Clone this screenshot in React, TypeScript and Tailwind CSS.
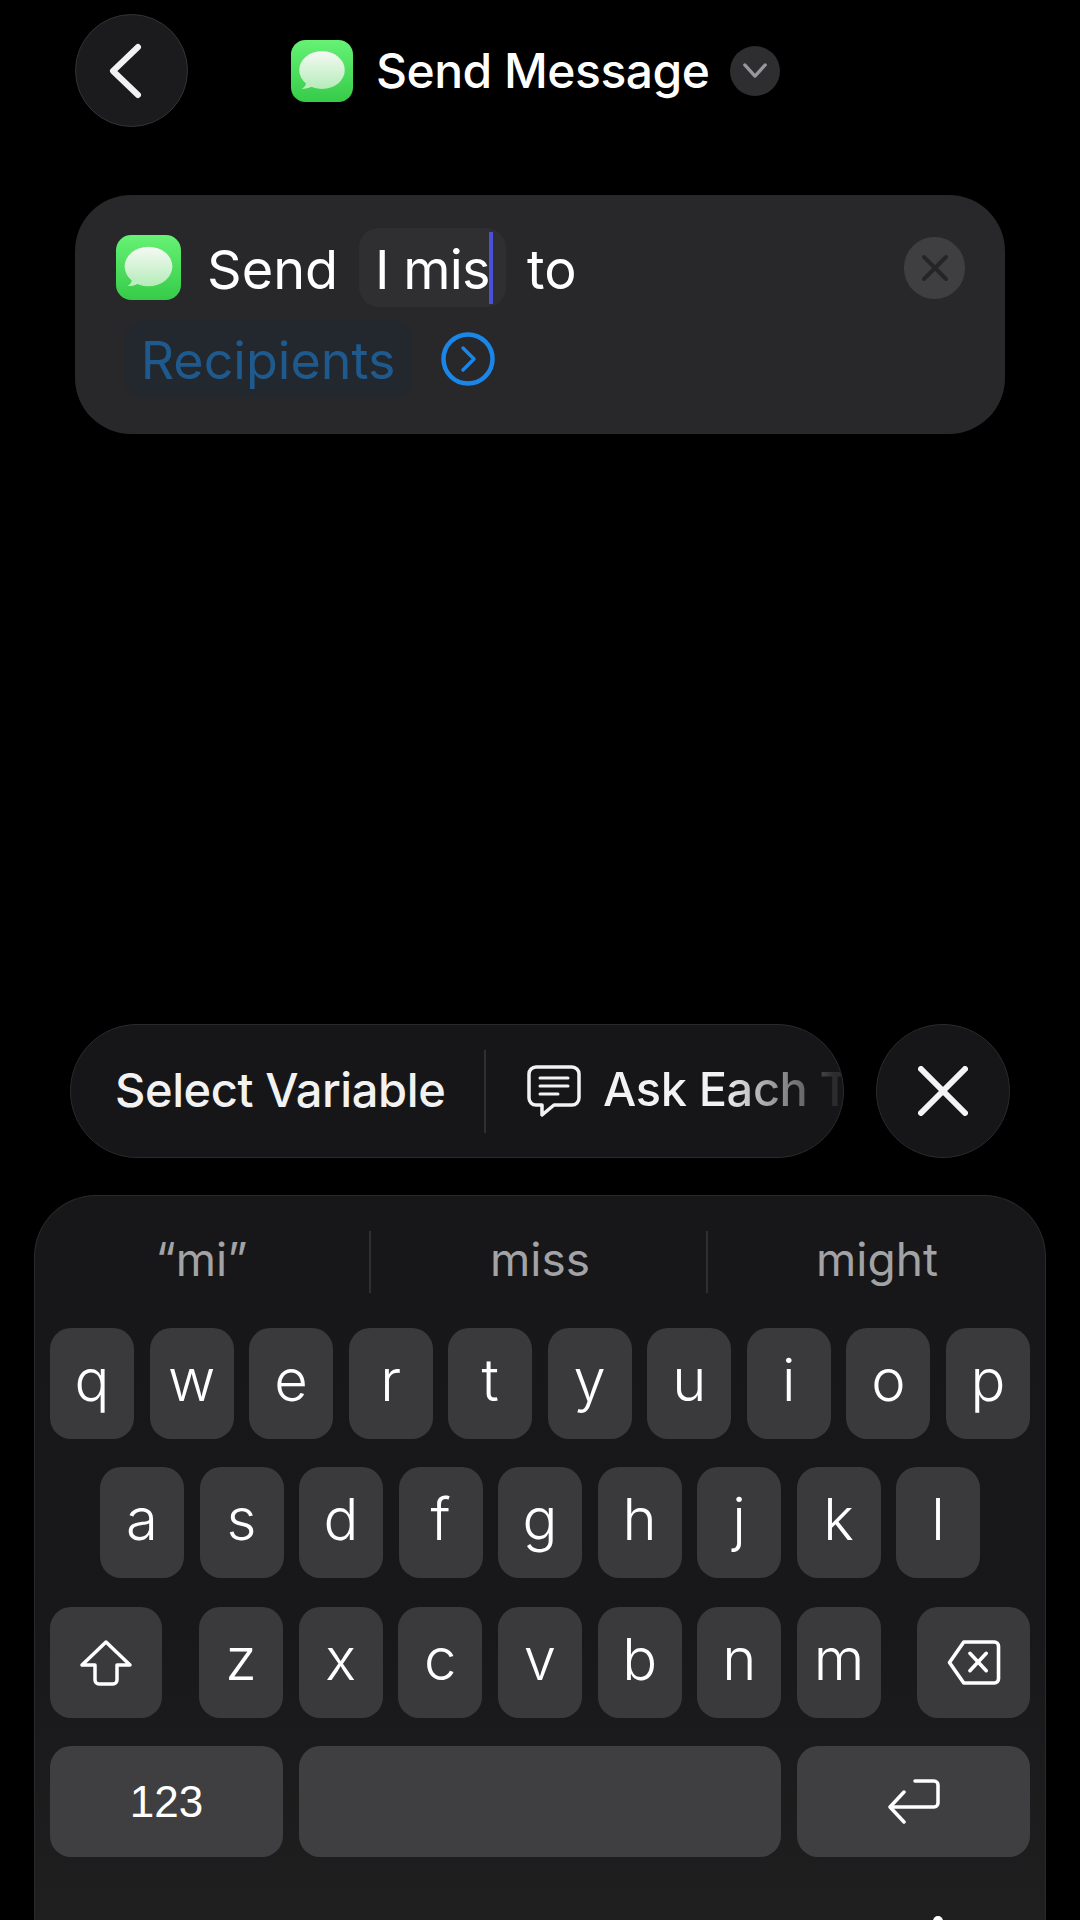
import { ReactNode } from "react";

const font = "font-['Inter','Liberation_Sans',sans-serif]";

const MessagesIcon = ({ className }: { className: string }) => (
  <svg viewBox="0 0 64 64" className={className}>
    <defs>
      <linearGradient id="msgBg" x1="0" y1="0" x2="0" y2="1">
        <stop offset="0" stopColor="#66f275" />
        <stop offset="1" stopColor="#36cb49" />
      </linearGradient>
      <linearGradient id="msgBubble" x1="0" y1="0" x2="0" y2="1">
        <stop offset="0" stopColor="#f6f9f4" />
        <stop offset="1" stopColor="#b4ecb8" />
      </linearGradient>
    </defs>
    <rect width="64" height="64" rx="15" fill="url(#msgBg)" />
    <ellipse cx="32" cy="31" rx="23.5" ry="19.5" fill="url(#msgBubble)" />
    <path d="M16 42c0 4-2 7-5 8 5 1 10-1 13-4z" fill="#bdeec0" />
  </svg>
);

const Key = ({ children, className = "w-[84px]" }: { children?: ReactNode; className?: string }) => (
  <div className={`h-[111px] shrink-0 rounded-[21px] bg-[#3a3a3c] flex items-center justify-center text-white text-[58px] font-light leading-none pb-[8px] ${className}`}>
    {children}
  </div>
);

const Row = ({ letters }: { letters: string }) => (
  <>
    {letters.split("").map((l) => (
      <Key key={l}>{l}</Key>
    ))}
  </>
);

export default function App() {
  return (
    <div className={`w-[1080px] h-[1920px] overflow-hidden bg-black flex flex-col ${font}`}>
      {/* header */}
      <div className="flex items-center pt-[14px] pl-[75px]">
        <button className="w-[113px] h-[113px] rounded-full bg-[#1b1b1d] border border-[#333335] flex items-center justify-center">
          <svg viewBox="0 0 40 60" className="w-[40px] h-[60px] mr-[13px]" fill="none" stroke="#f2f2f2" strokeWidth="6" strokeLinecap="round" strokeLinejoin="round">
            <path d="M33 6 8 30l25 24" />
          </svg>
        </button>
        <div className="flex items-center ml-[103px]">
          <MessagesIcon className="w-[62px] h-[62px]" />
          <span className="ml-[23px] text-white text-[48px] font-medium leading-none tracking-[-0.5px]">Send Message</span>
          <div className="ml-[21px] w-[50px] h-[50px] rounded-full bg-[#2e2e30] flex items-center justify-center">
            <svg viewBox="0 0 28 18" className="w-[26px] h-[17px]" fill="none" stroke="#98989c" strokeWidth="3.5" strokeLinecap="round" strokeLinejoin="round">
              <path d="m3 3 11 12L25 3" />
            </svg>
          </div>
        </div>
      </div>

      {/* action card */}
      <div className="relative mt-[68px] mx-[75px] h-[239px] rounded-[56px] bg-[#28282a] pl-[41px] pt-[33px]">
        <div className="flex items-center h-[79px] text-white text-[54px] leading-none">
          <MessagesIcon className="w-[65px] h-[65px]" />
          <span className="ml-[26px] pt-[4px]">Send</span>
          <div className="relative ml-[21px] w-[147px] h-[79px] rounded-[20px] bg-[#2f2f31] flex items-center pl-[16px] pt-[4px]">
            <span className="tracking-[-0.8px]">I mis</span>
            <div className="absolute left-[130px] top-[4px] w-[4px] h-[72px] bg-[#4a50d8]" />
          </div>
          <span className="ml-[21px] pt-[4px]">to</span>
        </div>
        <div className="flex items-center mt-[13px] ml-[8px]">
          <div className="h-[78px] w-[288px] rounded-[20px] bg-[#23282e] flex items-center justify-center text-[#1f5a8e] text-[52px] leading-none pt-[4px]">
            Recipients
          </div>
          <svg viewBox="0 0 54 54" className="ml-[29px] w-[54px] h-[54px]" fill="none" stroke="#1a86e8" strokeLinecap="round" strokeLinejoin="round">
            <circle cx="27" cy="27" r="24.5" strokeWidth="4.5" />
            <path d="m22 16 11 11-11 11" strokeWidth="3.5" />
          </svg>
        </div>
        <div className="absolute right-[40px] top-[42px] w-[61px] h-[62px] rounded-full bg-[#3f3f41] flex items-center justify-center">
          <svg viewBox="0 0 30 30" className="w-[30px] h-[30px]" fill="none" stroke="#252527" strokeWidth="4" strokeLinecap="round">
            <path d="m4 4 22 22M26 4 4 26" />
          </svg>
        </div>
      </div>

      {/* variable bar */}
      <div className="flex mt-[590px] ml-[70px]">
        <div className="w-[774px] h-[134px] rounded-full bg-[#161618] border border-[#2a2a2c] flex items-center pl-[44px] overflow-hidden">
          <span className="w-[369px] shrink-0 text-[#f2f2f2] text-[47px] font-medium leading-none tracking-[-0.4px] pb-[3px]">Select Variable</span>
          <div className="w-[2px] h-[83px] bg-[#2f2f31] shrink-0" />
          <svg viewBox="0 0 54 52" className="ml-[41px] w-[54px] h-[52px] shrink-0" fill="none" stroke="#f2f2f2" strokeLinecap="round" strokeLinejoin="round">
            <path d="M9 2h36a7 7 0 0 1 7 7v24a7 7 0 0 1-7 7H27L15 50v-10H9a7 7 0 0 1-7-7V9a7 7 0 0 1 7-7z" strokeWidth="3.5" />
            <path d="M13 13h28M13 21h28M13 29h18" strokeWidth="3" />
          </svg>
          <span className="ml-[22px] mb-[3px] w-[240px] shrink-0 overflow-hidden whitespace-nowrap bg-[linear-gradient(90deg,#f2f2f2_50%,#666668_84%,#2c2c2e_96%)] bg-clip-text text-transparent text-[47px] font-medium leading-[1.2] tracking-[-0.4px]">
            Ask Each Time
          </span>
        </div>
        <div className="ml-[32px] w-[134px] h-[134px] rounded-full bg-[#161618] border border-[#2a2a2c] flex items-center justify-center">
          <svg viewBox="0 0 50 50" className="w-[50px] h-[50px]" fill="none" stroke="#f4f4f4" strokeWidth="6" strokeLinecap="round">
            <path d="m3 3 44 44M47 3 3 47" />
          </svg>
        </div>
      </div>

      {/* keyboard */}
      <div className="relative mt-[37px] mx-[34px] flex-1 rounded-t-[62px] border-t border-x border-[#2a2a2c] bg-[linear-gradient(180deg,#17171a_0%,#18181a_60%,#1f1f20_100%)] px-[15px]">
        <div className="grid grid-cols-[321px_337px_1fr] h-[132px] items-center text-[#a3a3a6] text-[46px] leading-none">
          <div className="flex justify-center h-[62px] items-center border-r-2 border-[#2f2f31] pr-[16px] pb-[6px]">“mi”</div>
          <div className="flex justify-center h-[62px] items-center border-r-2 border-[#2f2f31] pl-[3px] pb-[6px]">miss</div>
          <div className="flex justify-center h-[62px] items-center pl-[16px] pb-[6px]">might</div>
        </div>
        <div className="flex justify-between">
          <Row letters="qwertyuiop" />
        </div>
        <div className="flex justify-between mt-[28px] px-[50px]">
          <Row letters="asdfghjkl" />
        </div>
        <div className="flex mt-[29px]">
          <Key className="w-[112px]">
            <svg viewBox="0 0 54 48" className="w-[54px] h-[48px] mt-[8px]" fill="none" stroke="#fff" strokeWidth="3.5" strokeLinejoin="round">
              <path d="M27 3 3 26h13v15a4 4 0 0 0 4 4h14a4 4 0 0 0 4-4V26h13z" />
            </svg>
          </Key>
          <div className="flex justify-between w-[682px] ml-[37px]">
            <Row letters="zxcvbnm" />
          </div>
          <Key className="w-[113px] ml-[36px]">
            <svg viewBox="0 0 54 46" className="w-[56px] h-[47px] mt-[8px]" fill="none" stroke="#fff" strokeWidth="3.5" strokeLinecap="round" strokeLinejoin="round">
              <path d="M17 3h30a4 4 0 0 1 4 4v32a4 4 0 0 1-4 4H17L3 23z" />
              <path d="m23 14 16 17M39 14 23 31" />
            </svg>
          </Key>
        </div>
        <div className="flex gap-[16px] mt-[28px]">
          <Key className="w-[233px] bg-[#3f3f41] !text-[44px] font-['Liberation_Sans',sans-serif] !font-normal !pb-0">123</Key>
          <Key className="w-[482px] bg-[#3f3f41]" />
          <Key className="w-[233px] bg-[#3f3f41]">
            <svg viewBox="0 0 54 46" className="w-[54px] h-[46px] mt-[6px]" fill="none" stroke="#fff" strokeWidth="3.5" strokeLinecap="round" strokeLinejoin="round">
              <path d="M28 3h19a4 4 0 0 1 4 4v18a4 4 0 0 1-4 4H4" />
              <path d="M17 14 3 29l14 15" />
            </svg>
          </Key>
        </div>
        <div className="absolute left-[898px] bottom-[-6px] w-[10px] h-[10px] rounded-full bg-white" />
      </div>
    </div>
  );
}
